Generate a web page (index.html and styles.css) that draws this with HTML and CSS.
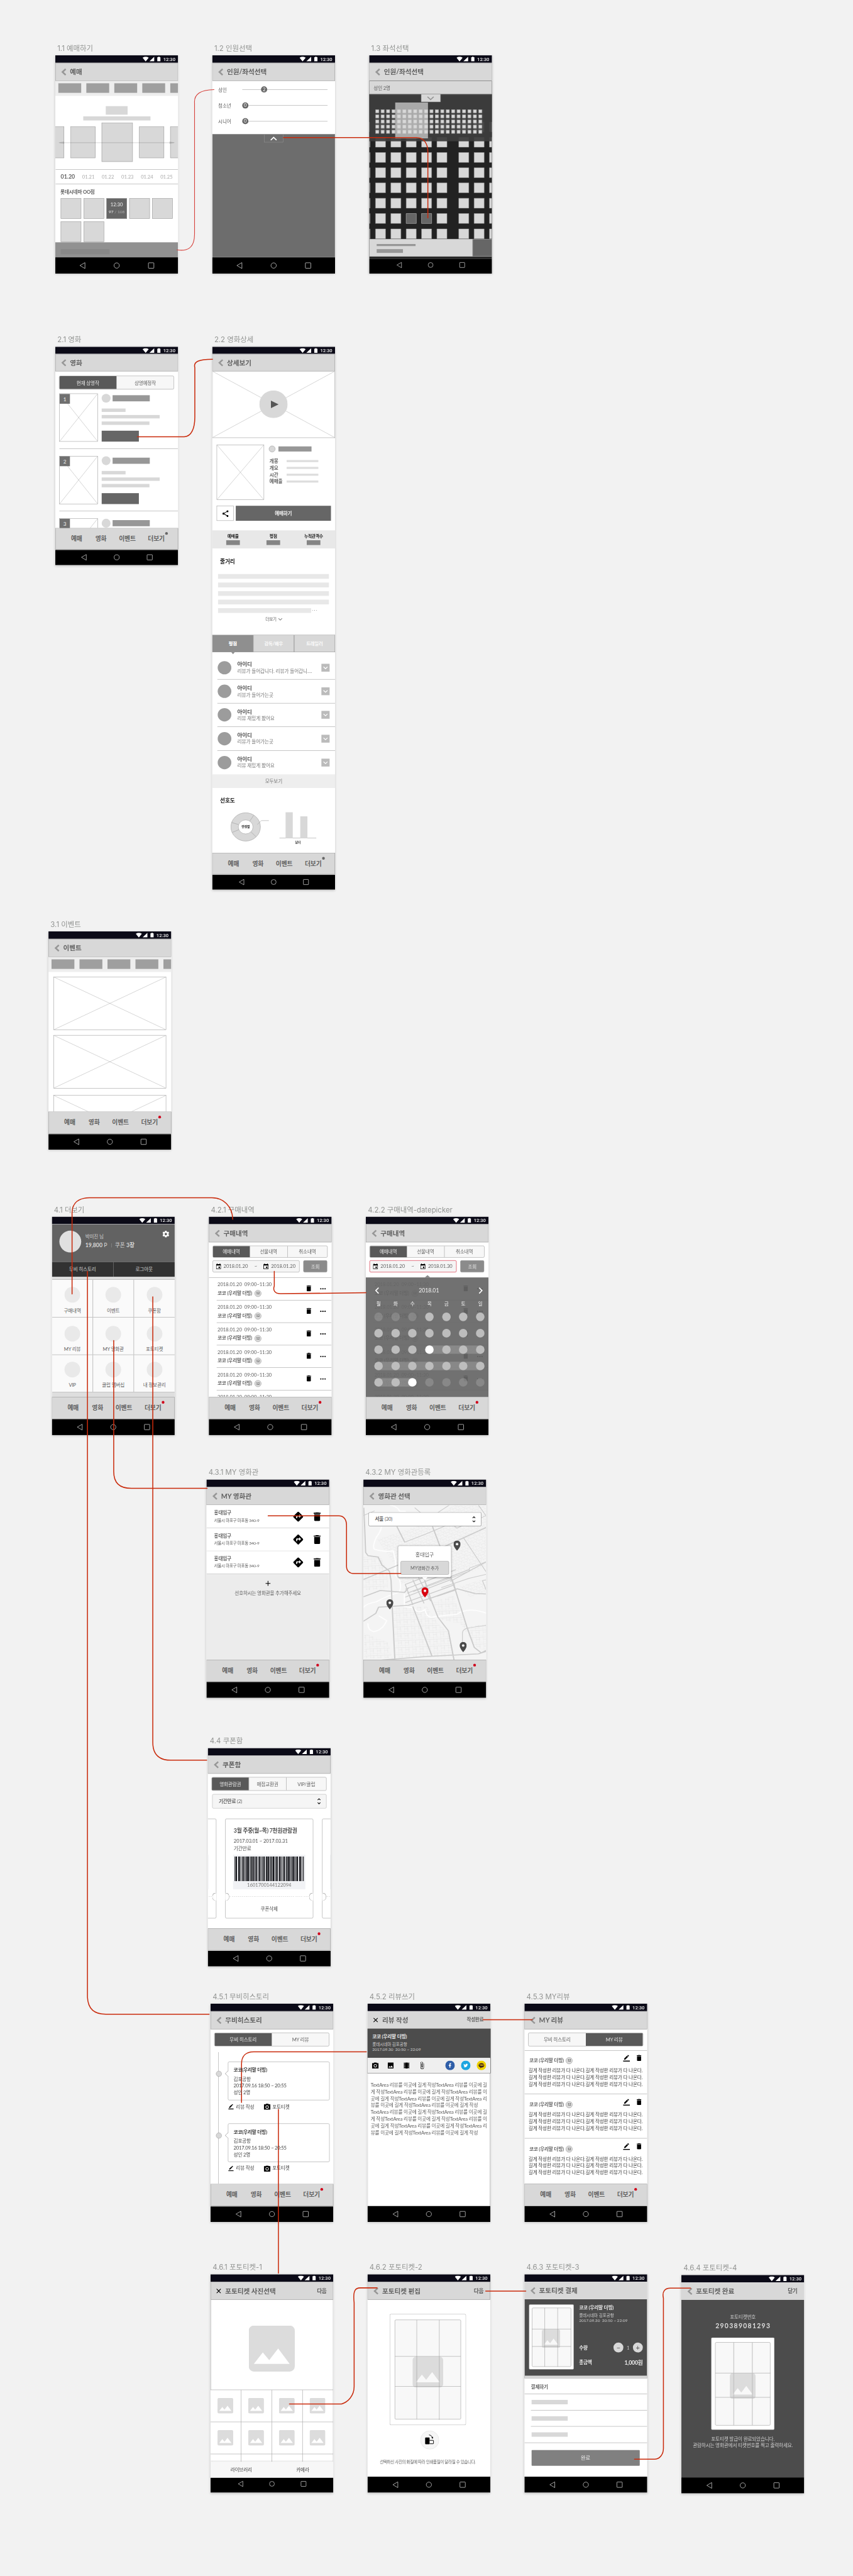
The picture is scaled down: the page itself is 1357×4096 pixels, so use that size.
FILE: index.html
```html
<!DOCTYPE html>
<html lang="ko">
<head>
<meta charset="utf-8">
<title>영화 예매 앱 와이어프레임</title>
<link rel="stylesheet" href="styles.css">
</head>
<body>
<svg class="defs" aria-hidden="true">
  <symbol id="i-status" viewBox="0 0 53 14"><path d="M0 3Q9-2.4 17.8 3L8.9 14zM34 .4V13.6H20zM43 1.6h2.6V.2h4.2v1.4h2.6v12H43z"/></symbol>
  <symbol id="i-sys" viewBox="0 0 360 48"><g fill="none" stroke="#e8e8e8" stroke-width="1.3"><path d="M87 15.5v17.3L72.3 24z" stroke-linejoin="round"/><circle cx="180" cy="24" r="7.8"/><rect x="273" y="16" width="16" height="16" rx="1.2"/></g></symbol>
  <symbol id="i-back" viewBox="0 0 16 22"><path d="M13.5 2.2L4 11l9.500 8.800" fill="none" stroke="#979797" stroke-width="4.600"/></symbol>
  <symbol id="i-up" viewBox="0 0 20 12"><path d="M1.500 10.500L10 2.500l8.500 8" fill="none" stroke="currentColor" stroke-width="3.200"/></symbol>
  <symbol id="i-down" viewBox="0 0 20 12"><path d="M1.500 1.500L10 9.500l8.500-8" fill="none" stroke="currentColor" stroke-width="3.200"/></symbol>
  <symbol id="i-cross" viewBox="0 0 100 100" preserveAspectRatio="none"><path d="M0 0L100 100M100 0L0 100" fill="none" stroke="#979797" stroke-width=".75" vector-effect="non-scaling-stroke"/></symbol>
  <symbol id="i-trash" viewBox="5 3 14 18"><path d="M6 19c0 1.100.9 2 2 2h8c1.100 0 2-.9 2-2V7H6v12zM19 4h-3.500l-1-1h-5l-1 1H5v2h14V4z"/></symbol>
  <symbol id="i-dots" viewBox="4 10 16 4"><path d="M6 10c-1.100 0-2 .9-2 2s.9 2 2 2 2-.9 2-2-.9-2-2-2zm12 0c-1.100 0-2 .9-2 2s.9 2 2 2 2-.9 2-2-.9-2-2-2zm-6 0c-1.100 0-2 .9-2 2s.9 2 2 2 2-.9 2-2-.9-2-2-2z"/></symbol>
  <symbol id="i-route" viewBox="2 2 20 20"><path d="M21.710 11.290l-9-9c-.39-.39-1.020-.39-1.410 0l-9 9c-.39.39-.39 1.020 0 1.410l9 9c.39.39 1.020.39 1.410 0l9-9c.39-.38.39-1.010 0-1.410zM14 14.500V12h-4v3H8v-4c0-.55.45-1 1-1h5V7.500l3.500 3.500-3.500 3.500z"/></symbol>
  <symbol id="i-share" viewBox="3 2 18 20"><path d="M18 16.080c-.76 0-1.440.3-1.960.77L8.910 12.700c.05-.23.09-.46.09-.7s-.04-.47-.09-.7l7.050-4.110c.54.5 1.250.81 2.040.81 1.660 0 3-1.340 3-3s-1.340-3-3-3-3 1.340-3 3c0 .24.04.47.09.7L8.040 9.810C7.500 9.310 6.790 9 6 9c-1.660 0-3 1.340-3 3s1.340 3 3 3c.79 0 1.500-.31 2.040-.81l7.120 4.160c-.05.21-.08.43-.08.65 0 1.610 1.310 2.920 2.920 2.920s2.920-1.310 2.920-2.920-1.310-2.920-2.920-2.920z"/></symbol>
  <symbol id="i-gear" viewBox="2 2 20 20"><path d="M19.430 12.980c.04-.32.07-.64.07-.98s-.03-.66-.07-.98l2.110-1.650c.19-.15.24-.42.12-.64l-2-3.460c-.12-.22-.39-.3-.61-.22l-2.490 1c-.52-.4-1.080-.73-1.690-.98l-.38-2.650C14.460 2.180 14.250 2 14 2h-4c-.25 0-.46.18-.49.42l-.38 2.650c-.61.25-1.170.59-1.690.98l-2.490-1c-.23-.09-.49 0-.61.22l-2 3.460c-.13.22-.07.49.12.64l2.110 1.650c-.04.32-.07.65-.07.98s.03.66.07.98l-2.110 1.650c-.19.15-.24.42-.12.64l2 3.460c.12.22.39.3.61.22l2.490-1c.52.4 1.080.73 1.690.98l.38 2.650c.03.24.24.42.49.42h4c.25 0 .46-.18.49-.42l.38-2.650c.61-.25 1.170-.59 1.690-.98l2.490 1c.23.09.49 0 .61-.22l2-3.460c.12-.22.07-.49-.12-.64l-2.110-1.650zM12 15.500c-1.930 0-3.500-1.570-3.500-3.500s1.570-3.500 3.500-3.500 3.500 1.570 3.500 3.500-1.570 3.500-3.500 3.500z"/></symbol>
  <symbol id="i-pin" viewBox="5 2 14 20"><path fill-rule="evenodd" d="M12 2C8.130 2 5 5.130 5 9c0 5.250 7 13 7 13s7-7.750 7-13c0-3.870-3.130-7-7-7z"/><circle cx="12" cy="9" r="2.500" fill="#f4f4f4"/></symbol>
  <symbol id="i-date" viewBox="3 1 18 20"><path d="M17 12h-5v5h5v-5zM16 1v2H8V1H6v2H5c-1.110 0-1.990.9-1.990 2L3 19c0 1.100.89 2 2 2h14c1.100 0 2-.9 2-2V5c0-1.100-.9-2-2-2h-1V1h-2zm3 18H5V8h14v11z"/></symbol>
  <symbol id="i-sort" viewBox="7 3 10 18"><path d="M12 5.830L15.170 9l1.410-1.410L12 3 7.410 7.590 8.830 9 12 5.830zm0 12.340L8.830 15l-1.410 1.410L12 21l4.590-4.590L15.170 15 12 18.170z"/></symbol>
  <symbol id="i-close" viewBox="5 5 14 14"><path d="M19 6.410L17.590 5 12 10.590 6.410 5 5 6.410 10.590 12 5 17.590 6.410 19 12 13.410 17.590 19 19 17.590 13.410 12z"/></symbol>
  <symbol id="i-image" viewBox="3 3 18 18"><path d="M21 19V5c0-1.100-.9-2-2-2H5c-1.100 0-2 .9-2 2v14c0 1.100.9 2 2 2h14c1.100 0 2-.9 2-2zM8.500 13.500l2.500 3.010L14.500 12l4.500 6H5l3.500-4.500z"/></symbol>
  <symbol id="i-camera" viewBox="2 2 20 18"><circle cx="12" cy="12" r="3.200"/><path d="M9 2L7.170 4H4c-1.100 0-2 .9-2 2v12c0 1.100.9 2 2 2h16c1.100 0 2-.9 2-2V6c0-1.100-.9-2-2-2h-3.170L15 2H9zm3 15c-2.760 0-5-2.240-5-5s2.240-5 5-5 5 2.240 5 5-2.240 5-5 5z"/></symbol>
  <symbol id="i-pencil" viewBox="0 0 24 24"><path d="M17.750 7L14 3.250l-10 10V17h3.750l10-10zm2.960-2.960c.39-.39.39-1.020 0-1.410L18.370.29c-.39-.39-1.020-.39-1.410 0L15 2.250 18.750 6l1.960-1.960zM0 20h24v4H0z"/></symbol>
  <symbol id="i-film" viewBox="4 3 16 18"><path d="M18 3v2h-2V3H8v2H6V3H4v18h2v-2h2v2h8v-2h2v2h2V3h-2zM8 17H6v-2h2v2zm0-4H6v-2h2v2zm0-4H6V7h2v2zm10 8h-2v-2h2v2zm0-4h-2v-2h2v2zm0-4h-2V7h2v2z"/></symbol>
  <symbol id="i-clip" viewBox="7 1 11 22"><path d="M16.500 6v11.500c0 2.210-1.790 4-4 4s-4-1.790-4-4V5c0-1.380 1.120-2.500 2.500-2.500s2.500 1.120 2.500 2.500v10.500c0 .55-.45 1-1 1s-1-.45-1-1V6H10v9.500c0 1.380 1.120 2.500 2.500 2.500s2.500-1.120 2.500-2.500V5c0-2.210-1.790-4-4-4S7 2.790 7 5v12.500c0 3.040 2.460 5.500 5.500 5.500s5.500-2.460 5.500-5.500V6h-1.500z"/></symbol>
  <symbol id="i-photo" viewBox="0 0 18 18"><path fill="#dcdcdc" fill-rule="evenodd" d="M2 0h14a2 2 0 0 1 2 2v14a2 2 0 0 1-2 2H2a2 2 0 0 1-2-2V2a2 2 0 0 1 2-2zM2 15h14l-4.500-6L8 13.510 5.500 10.500z"/></symbol>
  <symbol id="i-next" viewBox="0 0 14 22"><path d="M2.500 2l9 9-9 9" fill="none" stroke="#fff" stroke-width="3.200"/></symbol>
</svg>

<main class="viewport"><div class="board">

<!-- 1.1 -->
<section class="node n11"><h2 class="label">1.1 예매하기</h2><div class="phone">
  <div class="status"><svg><use href="#i-status"/></svg>12:30</div>
  <header class="bar"><svg class="back"><use href="#i-back"/></svg><h3>예매</h3></header>
  <div class="screen booking">
    <div class="chips"><i></i><i></i><i></i><i></i><i></i></div>
    <div class="heading"><i></i><i></i></div>
    <div class="carousel"><i></i><i></i><i class="main"></i><i></i><i></i>
      <svg class="swipe" viewBox="0 0 344 8"><path d="M0 4L18 0V8zM344 4L326 0V8z" fill="#000" opacity=".1"/><path d="M4 4H340" stroke="#000" stroke-width="2.600" opacity=".13"/></svg></div>
    <div class="dates num"><b>01.20</b><span>01.21</span><span>01.22</span><span>01.23</span><span>01.24</span><span>01.25</span></div>
    <h4>롯데시네마 OO점</h4>
    <div class="times"><i></i><i></i><div class="on num"><span>12:30</span><small>97 <em>/ 108</em></small></div><i></i><i></i><i></i><i></i></div>
    <div class="next"><i></i></div>
  </div>
  <svg class="sys"><use href="#i-sys"/></svg>
</div></section>

<!-- 1.2 -->
<section class="node n12"><h2 class="label">1.2 인원선택</h2><div class="phone">
  <div class="status"><svg><use href="#i-status"/></svg>12:30</div>
  <header class="bar"><svg class="back"><use href="#i-back"/></svg><h3>인원/좌석선택</h3></header>
  <div class="screen people">
    <div class="sliders">
      <div class="slide first"><span>성인</span><div class="track"><b class="num">2</b></div></div>
      <div class="slide"><span>청소년</span><div class="track"><b class="num">0</b></div></div>
      <div class="slide"><span>시니어</span><div class="track"><b class="num">0</b></div></div>
    </div>
    <div class="shade"><div class="pull"><svg><use href="#i-up"/></svg></div></div>
  </div>
  <svg class="sys"><use href="#i-sys"/></svg>
</div></section>

<!-- 1.3 -->
<section class="node n13"><h2 class="label">1.3 좌석선택</h2><div class="phone">
  <div class="status"><svg><use href="#i-status"/></svg>12:30</div>
  <header class="bar"><svg class="back"><use href="#i-back"/></svg><h3>인원/좌석선택</h3></header>
  <div class="screen seats">
    <div class="count">성인 2명</div>
    <svg class="hall" viewBox="0 114 360 424">
      <defs>
        <g id="seatrow" fill="#d8d8d8" stroke="#979797"><path d="M-27 .5h29.500v29H-27zM18.500.5H48v29H18.500zM63.500.5H93v29H63.500zM108.500.5H138v29H108.500zM153.500.5H183v29H153.500zM198.500.5H228v29H198.500zM262.500.5H292v29H262.500zM307.500.5H337v29H307.500zM352.500.5H382v29H352.500z"/></g>
        <pattern id="mini" x="18" y="158.500" width="15.900" height="15" patternUnits="userSpaceOnUse"><rect x=".5" y=".5" width="10" height="9.800" fill="#d8d8d8" stroke="#979797"/></pattern>
      </defs>
      <rect y="114" width="360" height="424" fill="#222"/>
      <use href="#seatrow" y="195"/><use href="#seatrow" y="239.600"/><use href="#seatrow" y="284.400"/><use href="#seatrow" y="329"/><use href="#seatrow" y="373.400"/><use href="#seatrow" y="418.300"/><use href="#seatrow" y="463.200"/><use href="#seatrow" y="508.300"/>
      <path d="M108.500 463.700H138v29H108.500zM153.500 463.700H183v29H153.500z" fill="#666" stroke="#979797"/>
      <rect y="114" width="360" height="138" fill="#3d3d3d" opacity=".94"/>
      <rect y="114" width="360" height="3" fill="#484848"/>
      <rect x="18" y="158.500" width="317" height="72" fill="url(#mini)"/>
      <rect x="76.300" y="138.400" width="96" height="105" fill="#d8d8d8" opacity=".7"/>
      <path d="M152.500 113.500v23H209v-23" fill="#d8d8d8" stroke="#979797"/>
      <path d="M171 121.500l9 8.500 9-8.500" fill="none" stroke="#979797" stroke-width="3"/>
    </svg>
    <div class="total"><div><i></i><i></i></div><b></b></div>
  </div>
  <svg class="sys short"><use href="#i-sys" y="-3.500"/></svg>
</div></section>

<!-- 2.1 -->
<section class="node n21"><h2 class="label">2.1 영화</h2><div class="phone">
  <div class="status"><svg><use href="#i-status"/></svg>12:30</div>
  <header class="bar"><svg class="back"><use href="#i-back"/></svg><h3>영화</h3></header>
  <div class="screen">
    <div class="seg two"><b>현재 상영작</b><span>상영예정작</span></div>
    <div class="movie"><div class="poster"><svg><use href="#i-cross"/></svg><em>1</em></div><div class="desc"><p><i></i><i></i></p><i></i><i></i><i></i><b></b></div></div>
    <div class="movie"><div class="poster"><svg><use href="#i-cross"/></svg><em>2</em></div><div class="desc"><p><i></i><i></i></p><i></i><i></i><i></i><b></b></div></div>
    <div class="movie"><div class="poster"><svg><use href="#i-cross"/></svg><em>3</em></div><div class="desc"><p><i></i><i></i></p><i></i><i></i><i></i><b></b></div></div>
  </div>
  <nav class="tabs quiet"><span>예매</span><span>영화</span><span>이벤트</span><span>더보기</span></nav>
  <svg class="sys"><use href="#i-sys"/></svg>
</div></section>

<!-- 2.2 -->
<section class="node n22"><h2 class="label">2.2 영화상세</h2><div class="phone">
  <div class="status"><svg><use href="#i-status"/></svg>12:30</div>
  <header class="bar"><svg class="back"><use href="#i-back"/></svg><h3>상세보기</h3></header>
  <div class="screen detail">
    <div class="video"><svg class="x"><use href="#i-cross"/></svg><svg class="play" viewBox="0 0 83 81"><ellipse cx="41.500" cy="40.500" rx="41.500" ry="40.500" fill="#d8d8d8"/><path d="M34 30v22l22.500-11z" fill="#555"/></svg></div>
    <div class="info"><div class="poster"><svg><use href="#i-cross"/></svg></div><div class="facts"><p><i></i><i></i></p><dl><dt>개봉</dt><dd></dd><dt>개요</dt><dd></dd><dt>시간</dt><dd></dd><dt>예매율</dt><dd></dd></dl></div></div>
    <div class="cta"><div class="share"><svg><use href="#i-share"/></svg></div><b>예매하기</b></div>
    <div class="stats"><div>예매율<i></i></div><div>평점<i></i></div><div>누적관객수<i></i></div></div>
    <div class="story"><h4>줄거리</h4><i></i><i></i><i></i><i></i><p><i></i><svg viewBox="0 0 14 2"><path d="M0 0h2v2H0zM6 0h2v2H6zM12 0h2v2h-2z" fill="#666"/></svg></p><div class="more">더보기<svg><use href="#i-down"/></svg></div></div>
    <div class="subtabs"><b>평점</b><span>감독/배우</span><span>트레일러</span></div>
    <ul class="reviews">
      <li><i></i><div><b>아이디</b><span>리뷰가 들어갑니다. 리뷰가 들어갑니….</span></div><em><svg><use href="#i-down"/></svg></em></li>
      <li><i></i><div><b>아이디</b><span>리뷰가 들어가는곳</span></div><em><svg><use href="#i-down"/></svg></em></li>
      <li><i></i><div><b>아이디</b><span>리뷰 재밌게 봤어요</span></div><em><svg><use href="#i-down"/></svg></em></li>
      <li><i></i><div><b>아이디</b><span>리뷰가 들어가는곳</span></div><em><svg><use href="#i-down"/></svg></em></li>
      <li><i></i><div><b>아이디</b><span>리뷰 재밌게 봤어요</span></div><em><svg><use href="#i-down"/></svg></em></li>
    </ul>
    <div class="all">모두보기</div>
    <div class="taste"><h4>선호도</h4><div class="charts">
      <div class="donut"><svg viewBox="0 0 120 86"><g fill="#d8d8d8" stroke="#979797"><ellipse cx="44" cy="43" rx="43.300" ry="41.500"/><ellipse cx="44" cy="43" rx="21.500" ry="20.500" fill="#fff"/><path d="M56 26l11.500-17M23 36L2.500 30M24 51L5 59M59.500 57.500L74 71.500M78 36l12-11.500h22" fill="none"/></g></svg><span>연령별</span></div>
      <div class="sex"><div><i></i><i></i></div><span>남녀</span></div>
    </div></div>
  </div>
  <nav class="tabs quiet"><span>예매</span><span>영화</span><span>이벤트</span><span>더보기</span></nav>
  <svg class="sys"><use href="#i-sys"/></svg>
</div></section>

<!-- 3.1 -->
<section class="node n31"><h2 class="label">3.1 이벤트</h2><div class="phone">
  <div class="status"><svg><use href="#i-status"/></svg>12:30</div>
  <header class="bar"><svg class="back"><use href="#i-back"/></svg><h3>이벤트</h3></header>
  <div class="screen">
    <div class="chips"><i></i><i></i><i></i><i></i><i></i></div>
    <div class="banners"><svg><use href="#i-cross"/></svg><svg><use href="#i-cross"/></svg><svg><use href="#i-cross"/></svg></div>
  </div>
  <nav class="tabs"><span>예매</span><span>영화</span><span>이벤트</span><span>더보기</span></nav>
  <svg class="sys"><use href="#i-sys"/></svg>
</div></section>

<!-- 4.1 -->
<section class="node n41"><h2 class="label">4.1 더보기</h2><div class="phone">
  <div class="status"><svg><use href="#i-status"/></svg>12:30</div>
  <div class="screen mypage">
    <div class="profile"><i></i><div><p>박미진 님</p><p class="pts"><b>19,800</b> P<s></s>쿠폰 <b>3장</b></p></div><svg><use href="#i-gear"/></svg></div>
    <div class="links"><span>무비 히스토리</span><span>로그아웃</span></div>
    <div class="menu">
      <div><i></i>구매내역</div><div><i></i>이벤트</div><div><i></i>쿠폰함</div>
      <div><i></i>MY 리뷰</div><div><i></i>MY 영화관</div><div><i></i>포토티켓</div>
      <div><i></i>VIP</div><div><i></i>클럽 멤버십</div><div><i></i>내 정보관리</div>
    </div>
  </div>
  <nav class="tabs"><span>예매</span><span>영화</span><span>이벤트</span><span>더보기</span></nav>
  <svg class="sys"><use href="#i-sys"/></svg>
</div></section>

<!-- 4.2.1 -->
<section class="node n421"><h2 class="label">4.2.1 구매내역</h2><div class="phone">
  <div class="status"><svg><use href="#i-status"/></svg>12:30</div>
  <header class="bar"><svg class="back"><use href="#i-back"/></svg><h3>구매내역</h3></header>
  <div class="screen">
    <div class="seg three low"><b>예매내역</b><span>선물내역</span><span>취소내역</span></div>
    <div class="period"><div class="num"><svg><use href="#i-date"/></svg><span>2018.01.20</span><em>~</em><svg><use href="#i-date"/></svg><span>2018.01.20</span></div><b>조회</b></div>
    <ul class="hist">
      <li><div><p class="num">2018.01.20&nbsp; 09:00~11:30</p><b>코코 (우리말 더빙)</b><i>12</i></div><svg class="t"><use href="#i-trash"/></svg><svg class="d"><use href="#i-dots"/></svg></li>
      <li><div><p class="num">2018.01.20&nbsp; 09:00~11:30</p><b>코코 (우리말 더빙)</b><i>12</i></div><svg class="t"><use href="#i-trash"/></svg><svg class="d"><use href="#i-dots"/></svg></li>
      <li><div><p class="num">2018.01.20&nbsp; 09:00~11:30</p><b>코코 (우리말 더빙)</b><i>12</i></div><svg class="t"><use href="#i-trash"/></svg><svg class="d"><use href="#i-dots"/></svg></li>
      <li><div><p class="num">2018.01.20&nbsp; 09:00~11:30</p><b>코코 (우리말 더빙)</b><i>12</i></div><svg class="t"><use href="#i-trash"/></svg><svg class="d"><use href="#i-dots"/></svg></li>
      <li><div><p class="num">2018.01.20&nbsp; 09:00~11:30</p><b>코코 (우리말 더빙)</b><i>12</i></div><svg class="t"><use href="#i-trash"/></svg><svg class="d"><use href="#i-dots"/></svg></li>
      <li><div><p class="num">2018.01.20&nbsp; 09:00~11:30</p></div></li>
    </ul>
  </div>
  <nav class="tabs"><span>예매</span><span>영화</span><span>이벤트</span><span>더보기</span></nav>
  <svg class="sys"><use href="#i-sys"/></svg>
</div></section>

<!-- 4.2.2 -->
<section class="node n422"><h2 class="label">4.2.2 구매내역-datepicker</h2><div class="phone">
  <div class="status"><svg><use href="#i-status"/></svg>12:30</div>
  <header class="bar"><svg class="back"><use href="#i-back"/></svg><h3>구매내역</h3></header>
  <div class="screen">
    <div class="seg three low"><b>예매내역</b><span>선물내역</span><span>취소내역</span></div>
    <div class="period active"><div class="num"><svg><use href="#i-date"/></svg><span>2018.01.20</span><em>~</em><svg><use href="#i-date"/></svg><span>2018.01.30</span></div><b>조회</b></div>
    <div class="under">
    <ul class="hist">
      <li><div><p class="num">2018.01.20&nbsp; 09:00~11:30</p><b>코코 (우리말 더빙)</b><i>12</i></div><svg class="t"><use href="#i-trash"/></svg><svg class="d"><use href="#i-dots"/></svg></li>
      <li><div><p class="num">2018.01.20&nbsp; 09:00~11:30</p><b>코코 (우리말 더빙)</b><i>12</i></div><svg class="t"><use href="#i-trash"/></svg><svg class="d"><use href="#i-dots"/></svg></li>
      <li><div><p class="num">2018.01.20&nbsp; 09:00~11:30</p><b>코코 (우리말 더빙)</b><i>12</i></div><svg class="t"><use href="#i-trash"/></svg><svg class="d"><use href="#i-dots"/></svg></li>
      <li><div><p class="num">2018.01.20&nbsp; 09:00~11:30</p><b>코코 (우리말 더빙)</b><i>12</i></div><svg class="t"><use href="#i-trash"/></svg><svg class="d"><use href="#i-dots"/></svg></li>
      <li><div><p class="num">2018.01.20&nbsp; 09:00~11:30</p><b>코코 (우리말 더빙)</b><i>12</i></div><svg class="t"><use href="#i-trash"/></svg><svg class="d"><use href="#i-dots"/></svg></li>
      <li><div><p class="num">2018.01.20&nbsp; 09:00~11:30</p></div></li>
    </ul>
    <div class="picker">
      <div class="month num"><svg class="prev"><use href="#i-next"/></svg><span>2018.01</span><svg><use href="#i-next"/></svg></div>
      <div class="week"><span>월</span><span>화</span><span>수</span><span>목</span><span>금</span><span>토</span><span>일</span></div>
      <div class="days"><i class="off"></i><i class="off"></i><i class="off"></i><i></i><i></i><i></i><i></i></div>
      <div class="days"><i></i><i></i><i></i><i></i><i></i><i></i><i></i></div>
      <div class="days from"><i></i><i></i><i></i><i class="on"></i><i></i><i></i><i></i></div>
      <div class="days full"><i></i><i></i><i></i><i></i><i></i><i></i><i></i></div>
      <div class="days to"><i></i><i></i><i class="on"></i><i class="off"></i><i class="off"></i><i class="off"></i><i class="off"></i></div>
    </div>
    </div>
  </div>
  <nav class="tabs"><span>예매</span><span>영화</span><span>이벤트</span><span>더보기</span></nav>
  <svg class="sys"><use href="#i-sys"/></svg>
</div></section>

<!-- 4.3.1 -->
<section class="node n431"><h2 class="label">4.3.1 MY 영화관</h2><div class="phone">
  <div class="status"><svg><use href="#i-status"/></svg>12:30</div>
  <header class="bar"><svg class="back"><use href="#i-back"/></svg><h3>MY 영화관</h3></header>
  <div class="screen cinemas">
    <div class="cinema"><div><b>홍대입구</b><span>서울시 마포구 마포동 340-9</span></div><svg class="r"><use href="#i-route"/></svg><svg class="t"><use href="#i-trash"/></svg></div>
    <div class="cinema"><div><b>홍대입구</b><span>서울시 마포구 마포동 340-9</span></div><svg class="r"><use href="#i-route"/></svg><svg class="t"><use href="#i-trash"/></svg></div>
    <div class="cinema"><div><b>홍대입구</b><span>서울시 마포구 마포동 340-9</span></div><svg class="r"><use href="#i-route"/></svg><svg class="t"><use href="#i-trash"/></svg></div>
    <div class="add"><svg viewBox="0 0 14 14"><path d="M7 0v14M0 7h14" stroke="#000" stroke-width="1.800"/></svg>선호하시는 영화관을 추가해주세요</div>
  </div>
  <nav class="tabs"><span>예매</span><span>영화</span><span>이벤트</span><span>더보기</span></nav>
  <svg class="sys"><use href="#i-sys"/></svg>
</div></section>

<!-- 4.3.2 -->
<section class="node n432"><h2 class="label">4.3.2 MY 영화관등록</h2><div class="phone">
  <div class="status"><svg><use href="#i-status"/></svg>12:30</div>
  <header class="bar"><svg class="back"><use href="#i-back"/></svg><h3>영화관 선택</h3></header>
  <div class="screen mapview">
    <svg class="map" viewBox="866 283 656 988" preserveAspectRatio="none">
      <defs>
        <pattern id="st1" width="34" height="30" patternUnits="userSpaceOnUse" patternTransform="rotate(-27)"><path d="M0 0H34M0 0V30M0 15H20M20 15V30M27 0V15" fill="none" stroke="#dadada" stroke-width="1.500"/></pattern>
        <pattern id="st2" width="38" height="44" patternUnits="userSpaceOnUse" patternTransform="rotate(-3)"><path d="M0 0H38M0 0V44M0 14H38M0 28H22M19 14V44" fill="none" stroke="#dadada" stroke-width="1.500"/></pattern>
      </defs>
      <rect x="866" y="283" width="656" height="988" fill="#f4f4f4"/>
      <path d="M940 500l110-40 180-80 120-97h172v390l-190 90-60-200-240 100zM1380 800l142-50v90l-90 30zM1040 640l110-60 60 150-150 60z" fill="url(#st1)"/>
      <path d="M1025 940l180-10 60 110 60 60 25 150-315 10zM866 610h90l40 90v110l-130 20zM1360 900l60 160 102-20v180l-60-40-100-180zM870 1100l130 60 20 100H870zM1240 900l110-40 30 180-110-30z" fill="url(#st2)" opacity=".85"/>
      <g fill="none" stroke="#fdfdfd" stroke-width="7" stroke-linecap="round"><path d="M1010 283q40 10 50 40l30 0M962 425q-5 30-25 60-25 60-12 80 60 20 100 10 20 80 10 120-5 40 25 65 10 60-5 80-60 20-120 60-50 10-69 35M1085 850v80l50 10q20 40 60 10 10 60 50 45 80-10 120-15 60-50 157-8M950 990l40 30q-20 60-70 70-30-10-30-50"/></g>
      <g fill="none" stroke="#cbcbcb" stroke-width="6.500" stroke-linejoin="round">
        <path d="M868 300l5 125 5 160 12 20 55 10 20 50 40 40 9 60 6 165 14 340M866 758l185-92 250-120 221-120M1045 420l42 100M1235 420l40 125 85 290 60 230 38 125 38 36 26-16M866 868l90-40 130 12 22-30M866 1024l66-50 15-40 160-12 130-50 130-55 95 30 60 3M1130 930l55 170 47 145M1190 750l35 130 40 120 55 85 30 185M965 1271l235-22 280-17 42-16" />
        <path d="M1330 770l192-125M1090 870l250-115M1090 905l265-115M1130 760l60 150M1090 790l40 130M1160 745l65 150M1088 790l110-50M1090 820l270-125M1100 845l330-150" stroke-width="5"/>
        <path d="M1400 490l122 220M1340 755l20 70-100 40M1522 645l-90 40v20l-300 130M1522 725l-90 25-150 60M1395 1160v-60q0-30 40-35l87-15M1522 760l-20 5 20 60M1085 520l110-50 140-70 30 30 157-80M1140 300l90 90 35-60 60-47M866 350l60-30M1480 283l42 70" stroke-width="4"/>
      </g>
    </svg>
    <div class="select city"><p><b>서울</b> (30)</p><svg><use href="#i-sort"/></svg></div>
    <div class="popup"><p>홍대입구</p><b>MY영화관 추가</b></div>
    <svg class="pin p1"><use href="#i-pin"/></svg><svg class="pin p2"><use href="#i-pin"/></svg><svg class="pin p3"><use href="#i-pin"/></svg><svg class="pin p4"><use href="#i-pin"/></svg>
  </div>
  <nav class="tabs"><span>예매</span><span>영화</span><span>이벤트</span><span>더보기</span></nav>
  <svg class="sys"><use href="#i-sys"/></svg>
</div></section>

<!-- 4.4 -->
<section class="node n44"><h2 class="label">4.4 쿠폰함</h2><div class="phone">
  <div class="status"><svg><use href="#i-status"/></svg>12:30</div>
  <header class="bar"><svg class="back"><use href="#i-back"/></svg><h3>쿠폰함</h3></header>
  <div class="screen">
    <div class="seg three"><b>영화관람권</b><span>매점교환권</span><span>VIP/클럽</span></div>
    <div class="select"><p><b>기간만료</b> (2)</p><svg><use href="#i-sort"/></svg></div>
    <div class="coupons">
      <div class="coupon"><div class="code"></div><div class="cut"></div></div>
      <div class="coupon"><h4>3월 주중(월~목) 7천원관람권</h4><p class="num">2017.03.01 ~ 2017.03.31</p><p>기간만료</p>
        <div class="code num"><svg viewBox="0 0 204 72" preserveAspectRatio="none"><path d="M0 36H204" stroke="#0c0d12" stroke-width="72" stroke-dasharray="1.600 .8 .8 .8 3.600 3.400 2.600 .6 2.400 1.400 1 1.200 .7 1.600 2.300 1.300 2.800 .6 .7 2.500 3.200 1 1.800 .5 3.500 1.400 .7 .8 1.600 1.400 2.800 1.400 3.900 .7 .7 1.500"/></svg>1601700144122094</div>
        <div class="cut"></div><div class="del">쿠폰삭제</div></div>
      <div class="coupon"><div class="code"></div><div class="cut"></div></div>
    </div>
  </div>
  <nav class="tabs"><span>예매</span><span>영화</span><span>이벤트</span><span>더보기</span></nav>
  <svg class="sys"><use href="#i-sys"/></svg>
</div></section>

<!-- 4.5.1 -->
<section class="node n451"><h2 class="label">4.5.1 무비히스토리</h2><div class="phone">
  <div class="status"><svg><use href="#i-status"/></svg>12:30</div>
  <header class="bar"><svg class="back"><use href="#i-back"/></svg><h3>무비히스토리</h3></header>
  <div class="screen">
    <div class="seg two"><b>무비 히스토리</b><span>MY 리뷰</span></div>
    <div class="timeline">
      <article><div class="watched"><b>코코(우리말 더빙)</b><p>김포공항</p><p>2017.09.16 18:50 ~ 20:55</p><p>성인 2명</p></div><div class="acts"><svg class="p"><use href="#i-pencil"/></svg><span>리뷰 작성</span><svg class="c"><use href="#i-camera"/></svg><span>포토티켓</span></div></article>
      <article><div class="watched"><b>코코(우리말 더빙)</b><p>김포공항</p><p>2017.09.16 18:50 ~ 20:55</p><p>성인 2명</p></div><div class="acts"><svg class="p"><use href="#i-pencil"/></svg><span>리뷰 작성</span><svg class="c"><use href="#i-camera"/></svg><span>포토티켓</span></div></article>
    </div>
  </div>
  <nav class="tabs"><span>예매</span><span>영화</span><span>이벤트</span><span>더보기</span></nav>
  <svg class="sys"><use href="#i-sys"/></svg>
</div></section>

<!-- 4.5.2 -->
<section class="node n452"><h2 class="label">4.5.2 리뷰쓰기</h2><div class="phone">
  <div class="status"><svg><use href="#i-status"/></svg>12:30</div>
  <header class="bar flat"><svg class="close"><use href="#i-close"/></svg><h3>리뷰 작성</h3><b class="sm">작성완료</b></header>
  <div class="screen write">
    <div class="film"><b>코코 (우리말 더빙)</b><p>롯데시네마 김포공항</p><p>2017.09.30&nbsp; 20:50 ~ 22:09</p></div>
    <div class="tools"><svg class="a"><use href="#i-camera"/></svg><svg class="b"><use href="#i-image"/></svg><svg class="c"><use href="#i-film"/></svg><svg class="d"><use href="#i-clip"/></svg>
      <svg class="sns fb" viewBox="0 0 28 28"><circle cx="14" cy="14" r="14" fill="#2f5ea8"/><path transform="translate(5.500 6) scale(.67)" fill="#fff" d="M17 2v4h-2c-.69 0-1 .81-1 1.500V10h3v4h-3v8h-4v-8H7v-4h3V6a4 4 0 0 1 4-4h3z"/></svg>
      <svg class="sns" viewBox="0 0 28 28"><circle cx="14" cy="14" r="14" fill="#1da5e0"/><path transform="translate(6.500 6.500) scale(.62)" fill="#fff" d="M22.460 6c-.77.35-1.600.58-2.460.69.88-.53 1.560-1.370 1.880-2.380-.83.5-1.750.85-2.720 1.050C18.370 4.500 17.260 4 16 4c-2.350 0-4.270 1.920-4.270 4.290 0 .34.04.67.11.98C8.280 9.090 5.110 7.380 3 4.790c-.37.63-.58 1.370-.58 2.150 0 1.490.75 2.810 1.910 3.560-.71 0-1.370-.2-1.950-.5v.03c0 2.080 1.480 3.820 3.440 4.210a4.220 4.220 0 0 1-1.930.07 4.280 4.280 0 0 0 4 2.980 8.520 8.520 0 0 1-5.330 1.840c-.34 0-.68-.02-1.020-.06C3.440 20.290 5.700 21 8.120 21 16 21 20.330 14.460 20.330 8.790c0-.19 0-.37-.01-.56.84-.6 1.560-1.360 2.140-2.230z"/></svg>
      <svg class="sns" viewBox="0 0 28 28"><circle cx="14" cy="14" r="14" fill="#eed100"/><path d="M14 7c4.700 0 8.300 2.900 8.300 6.500S18.700 20 14 20l-3.500 2.300.5-2.700c-3-.9-5.300-3.200-5.300-6.100C5.700 9.900 9.300 7 14 7z" fill="#3a1c1c"/><text x="14" y="15.600" font-size="5.500" font-weight="700" font-family="Roboto" text-anchor="middle" fill="#eed100">TALK</text></svg></div>
    <div class="area"><p>TextArea 리뷰를 이곳에 길게 작성TextArea 리뷰를 이곳에 길<br>게 작성TextArea 리뷰를 이곳에 길게 작성TextArea 리뷰를 이<br>곳에 길게 작성TextArea 리뷰를 이곳에 길게 작성TextArea 리<br>뷰를 이곳에 길게 작성TextArea 리뷰를 이곳에 길게 작성<br>TextArea 리뷰를 이곳에 길게 작성TextArea 리뷰를 이곳에 길<br>게 작성TextArea 리뷰를 이곳에 길게 작성TextArea 리뷰를 이<br>곳에 길게 작성TextArea 리뷰를 이곳에 길게 작성TextArea 리<br>뷰를 이곳에 길게 작성TextArea 리뷰를 이곳에 길게 작성</p></div>
  </div>
  <svg class="sys"><use href="#i-sys"/></svg>
</div></section>

<!-- 4.5.3 -->
<section class="node n453"><h2 class="label">4.5.3 MY리뷰</h2><div class="phone">
  <div class="status"><svg><use href="#i-status"/></svg>12:30</div>
  <header class="bar"><svg class="back"><use href="#i-back"/></svg><h3>MY 리뷰</h3></header>
  <div class="screen mine">
    <div class="seg two"><span>무비 히스토리</span><b>MY 리뷰</b></div>
    <article><div class="top"><b>코코 (우리말 더빙)</b><i>12</i><svg class="p"><use href="#i-pencil"/></svg><svg class="t"><use href="#i-trash"/></svg></div><p>길게 작성한 리뷰가 다 나온다.길게 작성한 리뷰가 다 나온다.<br>길게 작성한 리뷰가 다 나온다.길게 작성한 리뷰가 다 나온다.<br>길게 작성한 리뷰가 다 나온다.길게 작성한 리뷰가 다 나온다.</p></article>
    <article><div class="top"><b>코코 (우리말 더빙)</b><i>12</i><svg class="p"><use href="#i-pencil"/></svg><svg class="t"><use href="#i-trash"/></svg></div><p>길게 작성한 리뷰가 다 나온다.길게 작성한 리뷰가 다 나온다.<br>길게 작성한 리뷰가 다 나온다.길게 작성한 리뷰가 다 나온다.<br>길게 작성한 리뷰가 다 나온다.길게 작성한 리뷰가 다 나온다.</p></article>
    <article><div class="top"><b>코코 (우리말 더빙)</b><i>12</i><svg class="p"><use href="#i-pencil"/></svg><svg class="t"><use href="#i-trash"/></svg></div><p>길게 작성한 리뷰가 다 나온다.길게 작성한 리뷰가 다 나온다.<br>길게 작성한 리뷰가 다 나온다.길게 작성한 리뷰가 다 나온다.<br>길게 작성한 리뷰가 다 나온다.길게 작성한 리뷰가 다 나온다.</p></article>
  </div>
  <nav class="tabs"><span>예매</span><span>영화</span><span>이벤트</span><span>더보기</span></nav>
  <svg class="sys"><use href="#i-sys"/></svg>
</div></section>

<!-- 4.6.1 -->
<section class="node n461"><h2 class="label">4.6.1 포토티켓-1</h2><div class="phone">
  <div class="status"><svg><use href="#i-status"/></svg>12:30</div>
  <header class="bar"><svg class="close"><use href="#i-close"/></svg><h3>포토티켓 사진선택</h3><b>다음</b></header>
  <div class="screen gallery">
    <div class="preview"><svg><use href="#i-photo"/></svg></div>
    <div class="thumbs"><svg><use href="#i-photo"/></svg><svg><use href="#i-photo"/></svg><svg><use href="#i-photo"/></svg><svg><use href="#i-photo"/></svg><svg><use href="#i-photo"/></svg><svg><use href="#i-photo"/></svg><svg><use href="#i-photo"/></svg><svg><use href="#i-photo"/></svg><s></s><s></s><s></s><s></s></div>
    <div class="source"><span>라이브러리</span><span>카메라</span></div>
  </div>
  <svg class="sys short"><use href="#i-sys" y="-4"/></svg>
</div></section>

<!-- 4.6.2 -->
<section class="node n462"><h2 class="label">4.6.2 포토티켓-2</h2><div class="phone">
  <div class="status"><svg><use href="#i-status"/></svg>12:30</div>
  <header class="bar"><svg class="back"><use href="#i-back"/></svg><h3>포토티켓 편집</h3><b>다음</b></header>
  <div class="screen edit">
    <svg class="ticket" viewBox="0 0 224 326"><g fill="none" stroke="#979797"><rect x=".5" y=".5" width="223" height="325" rx="4" fill="#fff"/><rect x="15.500" y="17.500" width="193" height="291" rx="3" fill="#f8f8f8"/></g><use href="#i-photo" x="67" y="125" width="90" height="91"/><path d="M79.500 17.500v291M145.500 17.500v293M15.500 124.500h193M15.500 212.500h193" stroke="#979797"/></svg>
    <svg class="rotate" viewBox="0 0 55 55"><circle cx="27.500" cy="27.500" r="27" fill="#f6f6f6" stroke="#dcdcdc"/><rect x="14" y="20" width="13" height="20" rx="2"/><path d="M27 28.500h10.500a1 1 0 0 1 1 1v8a1 1 0 0 1-1 1H27M25.500 12.500q9 2 10 9.500m-2.600-2.400l2.700 3.400 1-4.500" fill="none" stroke="#000" stroke-width="1.700"/></svg>
    <p>선택하신 사진의 화질에 따라 인쇄품질이 달라질 수 있습니다.</p>
  </div>
  <svg class="sys"><use href="#i-sys"/></svg>
</div></section>

<!-- 4.6.3 -->
<section class="node n463"><h2 class="label">4.6.3 포토티켓-3</h2><div class="phone">
  <div class="status"><svg><use href="#i-status"/></svg>12:30</div>
  <header class="bar flat"><svg class="back"><use href="#i-back"/></svg><h3>포토티켓 결제</h3></header>
  <div class="screen pay">
    <div class="order">
      <svg class="ticket" viewBox="0 0 132 191"><g fill="none" stroke="#979797"><rect x=".5" y=".5" width="131" height="190" rx="3" fill="#fff"/><rect x="9.500" y="10.500" width="114" height="172" rx="3" fill="#f8f8f8"/></g><use href="#i-photo" x="38" y="73.500" width="54" height="54"/><path d="M46.500 10.500v172M84.500 10.500v172M8.500 72.500h115M9.500 123.500h114" stroke="#979797"/></svg>
      <div class="film"><b>코코 (우리말 더빙)</b><p>롯데시네마 김포공항</p><p>2017.09.30&nbsp; 20:50 ~ 22:09</p>
        <div class="qty"><b>수량</b><i>−</i><span>1</span><i>+</i></div>
        <div class="sum"><b>총금액</b><b>1,000원</b></div></div>
    </div>
    <h4>결제하기</h4>
    <div class="method"><i></i></div><div class="method"><i></i></div><div class="method"><i></i></div>
    <div class="done">완료</div>
  </div>
  <svg class="sys"><use href="#i-sys"/></svg>
</div></section>

<!-- 4.6.4 -->
<section class="node n464"><h2 class="label">4.6.4 포토티켓-4</h2><div class="phone">
  <div class="status"><svg><use href="#i-status"/></svg>12:30</div>
  <header class="bar flat"><svg class="back"><use href="#i-back"/></svg><h3>포토티켓 완료</h3><b>닫기</b></header>
  <div class="screen issued">
    <p>포토티켓번호</p><strong>290389081293</strong>
    <svg class="ticket" viewBox="0 0 186 271"><g fill="none" stroke="#979797"><rect x=".5" y=".5" width="185" height="270" rx="3" fill="#fff"/><rect x="12.500" y="14.500" width="161" height="243" rx="3" fill="#f8f8f8"/></g><use href="#i-photo" x="55" y="104.500" width="75.500" height="75.500"/><path d="M12.500 104.500h162M12.500 175.500h161" stroke="#979797"/><path d="M66.500 14.500v243M121 14.500v243" stroke="#bbb" stroke-width="1.800"/></svg>
    <p>포토티켓 발급이 완료되었습니다.<br>관람하시는 영화관에서 티켓번호를 찍고 출력하세요.</p>
  </div>
  <svg class="sys"><use href="#i-sys"/></svg>
</div></section>

<!-- screen flow connectors -->
<svg class="flow" viewBox="0 0 2500 7548">
  <path class="thin" d="M518.400 732C548 737 570 728 570.200 686V302C568 276 588 263 627.400 262.700"/>
  <path d="M830.700 403H1218C1242 402 1254 420 1254 446V638.600"/>
  <path d="M402.700 1279.700H540C561 1279 571 1255 571 1222V1077C566 1059 584 1053 622.700 1052.700"/>
  <path d="M211.200 3791.600V3553C212 3525 230 3510 262 3509.600H616C656 3507 681 3537 682.200 3572.500"/>
  <path d="M256.300 3725V5850C257 5885 275 5902 310 5902H613"/>
  <path d="M333.300 3928V4311C333 4345 350 4361 385 4361H607"/>
  <path d="M447.800 3800V5106C448 5140 465 5157.500 500 5157.500H606"/>
  <path d="M803.900 3725V3768C800 3779 803 3791 823 3790.700L1072.700 3788"/>
  <path d="M785.800 4441.600H993C1008 4441.600 1015.600 4453 1015.600 4469V4590C1015.600 4603 1025 4610.600 1036 4610.600H1174.700"/>
  <path d="M707.900 6160.500V6047C708 6025 720 6012 743.600 6012H1073.700"/>
  <path d="M816 6181V6660.500"/>
  <path d="M1415.400 5918H1559.700"/>
  <path d="M848.200 7044H1001C1020 7038 1037.900 7020 1037.900 6993V6747C1034 6712 1041 6703.800 1056 6703.800H1105.200"/>
  <path d="M1423.400 6713.400H1541"/>
  <path d="M1859.600 7205.700H1919.600C1935 7205 1944.400 7190 1944.400 7174V6734C1940 6715 1948 6704.400 1965 6704.400H2023.800"/>
</svg>
</div></main>
</body>
</html>
```
FILE: styles.css
```css
* { box-sizing: border-box; }
body, h2, h3, h4, p, ul, dl, dd { margin: 0; padding: 0; }
ul { list-style: none; }
i, em { font-style: normal; }
body {
  background: #f2f2f2;
  font-family: Lato, "Noto Sans CJK KR", sans-serif;
  color: #5f5f5f;
}
.defs { position: absolute; width: 0; height: 0; }

.viewport { width: 1357px; height: 4096px; overflow: hidden; }
.board {
  position: relative;
  width: 2500px;
  height: 7548px;
  font-size: 14px;
  line-height: 1.43;
  letter-spacing: -.3px;
  transform: scale(.5428, .54266);
  transform-origin: 0 0;
}
.num { letter-spacing: 0; }
svg { display: block; flex: none; }

/* Artboards on the canvas */
.node { position: absolute; width: 360px; }
.n11 { left: 162px; top: 122px; }
.n12 { left: 622px; top: 122px; }
.n13 { left: 1082px; top: 122px; }
.n21 { left: 162px; top: 976px; }
.n22 { left: 622px; top: 976px; }
.n31 { left: 142px; top: 2689px; }
.n41 { left: 152px; top: 3525px; }
.n421 { left: 612px; top: 3525px; }
.n422 { left: 1072px; top: 3525px; }
.n431 { left: 605px; top: 4295px; }
.n432 { left: 1065px; top: 4295px; }
.n44 { left: 609px; top: 5082px; }
.n451 { left: 617px; top: 5831px; }
.n452 { left: 1077px; top: 5831px; }
.n453 { left: 1537px; top: 5831px; }
.n461 { left: 617px; top: 6624px; }
.n462 { left: 1077px; top: 6624px; }
.n463 { left: 1537px; top: 6624px; }
.n464 { left: 1997px; top: 6626px; }
.label {
  height: 40px;
  padding: 6px 0 0 6px;
  font: 400 21px/28px Inter, "Noto Sans CJK KR", sans-serif;
  letter-spacing: 0;
  color: #929492;
  white-space: nowrap;
}
.phone {
  display: flex;
  flex-direction: column;
  height: 640px;
  overflow: hidden;
  background: #fff;
  box-shadow: 0 2px 7px rgba(0, 0, 0, .2);
}
.screen { flex: 1; min-height: 0; overflow: hidden; }

/* Shared chrome */
.status {
  display: flex;
  align-items: center;
  justify-content: flex-end;
  gap: 7px;
  height: 22px;
  flex: none;
  padding-right: 8px;
  background: #0b0a17;
  color: #eee;
  fill: #fff;
  font: 500 14px/22px Roboto, sans-serif;
  letter-spacing: 0;
}
.status svg { width: 53px; height: 14px; }
.bar {
  display: flex;
  align-items: center;
  height: 53px;
  flex: none;
  padding: 0 19px 0 16px;
  background: #d8d8d8;
  border: 1px solid #979797;
}
.bar.flat { height: 51px; border-color: #d8d8d8; }
.bar .back { width: 16px; height: 22px; margin-right: 10px; }
.bar .close { width: 14px; height: 14px; margin: 0 12px 0 0; }
.bar h3 { flex: 1; font-size: 19.500px; font-weight: 700; letter-spacing: 0; color: #606060; }
.bar b { font-size: 16px; letter-spacing: -.6px; }
.bar b.sm { font-size: 14px; }
.tabs {
  position: relative;
  display: grid;
  grid-template-columns: 71.500px 69px 85px auto;
  height: 65px;
  flex: none;
  padding-left: 45px;
  background: #d8d8d8;
  border: 1px solid #979797;
  font-size: 18px;
  font-weight: 700;
  line-height: 61px;
  letter-spacing: -.2px;
}
.tabs::after {
  content: "";
  position: absolute;
  left: 321px;
  top: 11px;
  width: 8px;
  height: 8px;
  border-radius: 50%;
  background: #d0021b;
}
.tabs.quiet::after { background: #666; }
.sys { width: 360px; height: 47px; background: #000; }
.sys.short { height: 44px; overflow: hidden; }
.sys use { width: 360px; height: 48px; }
.n11 .sys, .n12 .sys { height: 48px; }
.seg {
  display: flex;
  height: 40px;
  margin: 10px 12px 0 11px;
  border: 1px solid #979797;
  border-radius: 4px;
  overflow: hidden;
  background: #f7f7f7;
  text-align: center;
  line-height: 39px;
}
.seg.low { height: 35px; line-height: 34px; }
.seg > * { flex: 1; font-weight: 400; }
.seg b { background: #595959; color: #e6e6e6; }
.seg span + span, .seg b + span { border-left: 1px solid #979797; }
.seg.three > :nth-child(1) { flex: 0 0 107.500px; }
.seg.three > :nth-child(2) { flex: 0 0 110px; }
.select {
  display: flex;
  align-items: center;
  justify-content: space-between;
  width: 335px;
  height: 42px;
  margin: 10px 0 0 13px;
  padding: 0 16px 0 18px;
  background: #f5f5f5;
  border: 1px solid #b0b0b0;
  border-radius: 4px;
}
.select svg { width: 10px; height: 18px; }
.chips {
  display: flex;
  gap: 15px;
  height: 44px;
  padding: 7px 0 0 9px;
  background: #eee;
}
.chips i { flex: none; width: 67px; height: 28px; background: #9f9f9f; }

/* 1.1 booking */
.booking { display: flex; flex-direction: column; }
.booking > * { flex: none; }
.heading { display: flex; flex-direction: column; align-items: center; gap: 5px; padding-top: 30px; }
.heading i { width: 197px; height: 12px; background: #d8d8d8; }
.heading i:first-child { width: 64px; height: 25px; }
.carousel {
  position: relative;
  display: flex;
  align-items: center;
  gap: 18.500px;
  margin: 7px 0 0 -47px;
}
.carousel i { flex: none; width: 73px; height: 92px; background: #d8d8d8; border: 1px solid #979797; }
.carousel .main { width: 91px; height: 114px; }
.swipe { position: absolute; left: 55px; top: 54px; width: 344px; height: 8px; }
.dates {
  display: flex;
  align-items: center;
  justify-content: space-between;
  height: 44px;
  margin: 22px 0 0 1px;
  padding: 0 16px 0 15px;
  border: solid #979797;
  border-width: 1px 0;
  color: #aaa;
}
.dates b { font-size: 16.300px; color: #5f5f5f; }
.booking h4 { height: 41px; padding-left: 15px; line-height: 44px; }
.times { display: grid; grid-template-columns: repeat(5, 60px); gap: 8px 7px; padding-left: 16px; height: 129px; align-content: start; }
.times > * { height: 60px; background: #d8d8d8; border: 1px solid #979797; }
.times .on {
  display: flex;
  flex-direction: column;
  align-items: center;
  padding-top: 8px;
  background: #666;
  color: #f2f2f2;
}
.times small { font-size: 12px; line-height: 22px; white-space: nowrap; }
.times em { color: #aaa; }
.next { height: 48px; padding: 20px 0 0 16px; background: #919191; }
.next i { display: block; width: 143px; height: 15px; background: #888; }

/* 1.2 people */
.people { display: flex; flex-direction: column; }
.sliders { height: 156px; padding: 2px 22px 0 17.500px; }
.slide { display: flex; align-items: center; height: 46.500px; }
.slide span { width: 70.500px; padding-top: 4px; }
.track { flex: 1; display: flex; align-items: center; height: 18px; background: linear-gradient(#979797, #979797) 0 50% / 100% 1px no-repeat; }
.track b {
  width: 18px;
  height: 18px;
  border-radius: 50%;
  background: #666;
  color: #fff;
  font-weight: 400;
  line-height: 18px;
  text-align: center;
}
.first .track b { margin-left: 55px; }
.shade { flex: 1; background: #6d6d6d; border: 1px solid #979797; }
.pull {
  width: 56px;
  height: 24px;
  margin: -1px auto;
  padding: 6px 0 0 17px;
  border: 1px solid #979797;
  color: #fff;
}
.pull svg { width: 20px; height: 12px; }

/* 1.3 seats */
.seats { background: #222; }
.count { height: 39px; padding-left: 13px; line-height: 41px; background: #d8d8d8; }
.hall { width: 360px; height: 424px; }
.total { display: flex; justify-content: space-between; height: 52px; background: #d8d8d8; border: 1px solid #979797; }
.total div { padding: 14px 0 0 21px; }
.total i { display: block; width: 114px; height: 6px; background: #979797; }
.total i + i { width: 77px; height: 11px; margin-top: 9px; }
.total b { width: 56px; background: #666; border-left: 1px solid #979797; }

/* 2.1 movies */
.n21 .status, .n22 .status { height: 21px; }
.n21 .bar, .n22 .bar { height: 51px; }
.n21 .seg { margin-top: 13px; }
.n21 .tabs { height: 63px; line-height: 60px; }
.n21 .sys { height: 46px; }
.movie { display: flex; gap: 11px; height: 162px; margin: 12px 0 0 12px; border-bottom: 1px solid #979797; }
.movie + .movie { margin-top: 21px; }
.poster { position: relative; flex: none; width: 113px; height: 141px; border: 1px solid #979797; }
.poster svg { width: 100%; height: 100%; }
.poster em {
  position: absolute;
  left: 0;
  top: 0;
  width: 30px;
  height: 29px;
  background: #707070;
  color: #f2f2f2;
  font-size: 15px;
  line-height: 30px;
  text-align: center;
}
.desc > i { display: block; width: 140px; height: 10px; margin-bottom: 9px; background: #d8d8d8; }
.desc > i:nth-of-type(1) { width: 70px; }
.desc > i:nth-of-type(2) { width: 170px; }
.desc p { display: flex; align-items: center; gap: 6px; height: 27px; margin: 0 0 17px; }
.desc p i { width: 109px; height: 18px; background: #979797; }
.desc p i:first-child { width: 26px; height: 26px; border-radius: 50%; background: #d8d8d8; }
.desc > b { display: block; width: 109px; height: 32px; margin-top: 17px; background: #666; }

/* 2.2 movie detail */
.n22 .phone { height: 1591px; }
.n22 .tabs { height: 63px; line-height: 60px; }
.n22 .sys { height: 45px; }
.video { position: relative; height: 195px; border: solid #979797; border-width: 0 1px 1px; }
.video .x { width: 100%; height: 100%; }
.play { position: absolute; left: 137px; top: 56px; width: 83px; height: 81px; }
.info { display: flex; padding: 20px 0 0 13px; }
.info .poster { width: 139px; height: 162px; }
.facts { padding: 3px 0 0 14px; }
.facts p { display: flex; align-items: center; gap: 9px; height: 19px; }
.facts p i { width: 97px; height: 15px; background: #979797; }
.facts p i:first-child { width: 19px; height: 19px; border-radius: 50%; background: #d8d8d8; border: 1px solid #979797; }
.facts dl { display: grid; grid-template-columns: 50px 93px; align-items: center; padding: 16px 0 0 2px; line-height: 20px; font-weight: 700; }
.facts dt { white-space: nowrap; }
.facts dd { height: 6px; background: #ddd; }
.cta { display: flex; gap: 6px; padding: 17px 0 28px 13px; }
.share { width: 50px; height: 44px; padding: 12px 0 0 16px; border: 1px solid #979797; }
.share svg { width: 18px; height: 20px; fill: #000; }
.cta b { width: 279px; background: #666; color: #f2f2f2; line-height: 44px; text-align: center; }
.stats { display: flex; height: 53px; padding: 8px 7px 0 5px; justify-content: space-between; background: #e8e8e8; color: #222; font-size: 12.500px; font-weight: 700; text-align: center; letter-spacing: -.6px; line-height: 19px; }
.stats div { width: 112px; }
.stats i { display: block; width: 40px; height: 14px; margin: 2px auto 0; background: #858585; }
.story { height: 253px; padding: 26px 0 0 17px; }
.story h4, .taste h4 { height: 49px; padding-left: 6px; font-size: 16px; line-height: 24px; color: #222; }
.story i { display: block; width: 325px; height: 14px; margin-bottom: 11px; background: #e8e8e8; }
.story p { display: flex; align-items: center; gap: 3px; height: 14px; }
.story p i { width: 273px; margin: 0; }
.story p svg { width: 14px; height: 2px; }
.more { display: flex; align-items: center; gap: 5px; padding: 10px 0 0 139px; font-size: 12px; }
.more svg { width: 13px; height: 9px; color: #8c8c8c; }
.subtabs { position: relative; display: flex; height: 51px; border: 1px solid #979797; background: #979797; gap: 1.500px; line-height: 50px; text-align: center; font-weight: 700; color: #fbfbfb; font-size: 13.500px; }
.subtabs > * { flex: 1; background: #d8d8d8; }
.subtabs b { background: #8f8f8f; }
.subtabs::after { content: ""; position: absolute; left: 55px; top: 50px; border: 5px solid transparent; border-top: 6px solid #8f8f8f; border-bottom: 0; }
.reviews { padding: 11px 0 0 15px; }
.reviews li { display: flex; align-items: center; height: 69.400px; padding: 0 16px 0 1px; border-bottom: 1px solid #979797; }
.reviews li:last-child { border: 0; }
.reviews li > i { width: 40px; height: 39px; border-radius: 50%; background: #9c9c9c; }
.reviews div { flex: 1; padding-left: 17.500px; }
.reviews b { display: block; font-size: 15.500px; font-weight: 500; line-height: 20px; color: #222; letter-spacing: 0; }
.reviews span { display: block; line-height: 20px; color: #777; white-space: nowrap; letter-spacing: -.1px; }
.reviews em { width: 24px; height: 23px; padding: 7px 0 0 5px; background: #bbb; color: #fff; }
.reviews em svg { width: 14px; height: 10px; }
.all { height: 40px; background: #eee; line-height: 39px; text-align: center; color: #777; }
.taste { padding: 24px 0 0 17px; }
.taste h4 { height: 47px; }
.charts { display: flex; }
.donut { position: relative; width: 120px; margin-left: 37px; }
.donut svg { width: 120px; height: 86px; }
.donut span { position: absolute; left: 22px; top: 36px; width: 44px; font-size: 9px; font-weight: 700; line-height: 14px; text-align: center; color: #222; }
.sex { width: 108px; margin-left: 23px; font-size: 9px; font-weight: 700; line-height: 26px; text-align: center; color: #222; }
.sex div { display: flex; align-items: flex-end; gap: 22px; height: 76px; padding-left: 18px; background: linear-gradient(#979797, #979797) 0 100% / 100% 1px no-repeat; }
.sex i { width: 21px; height: 76px; background: #d8d8d8; }
.sex i + i { height: 64px; }

/* 3.1 events */
.banners { padding: 14px 15px 0; }
.banners svg { width: 330px; height: 156px; margin-bottom: 15px; border: 1px solid #979797; }
.banners svg:nth-child(2) { margin-bottom: 20px; }

/* 4.1 my page */
.mypage { display: flex; flex-direction: column; background: #dedede; }
.mypage > * { flex: none; }
.profile { display: flex; height: 111px; padding: 19px 16px 0 22px; background: #626262; color: #ccc; }
.profile > i { width: 64px; height: 64px; border-radius: 50%; background: #e0e0e0; }
.profile div { flex: 1; padding: 8px 0 0 12px; }
.pts { margin-top: 4px; font-size: 16px; letter-spacing: 0; color: #d8d8d8; }
.pts s { display: inline-block; width: 1px; height: 12px; margin: 0 10px 0 12px; background: #999; }
.profile svg { width: 20px; height: 20px; fill: #fff; }
.links { display: flex; height: 43px; background: #323232; color: #ccc; text-align: center; line-height: 42px; }
.links span { flex: 1; }
.links span + span { border-left: 1px solid #8a8a8a; }
.menu { display: grid; grid-template-columns: 120px 120px 1fr; grid-template-rows: repeat(3, 110px); height: 331px; margin: 8px 0 0 1px; border-top: 1px solid #979797; background: #fafafa; text-align: center; }
.menu div { padding-top: 21px; border: solid #979797; border-width: 0 0 1px; }
.menu div:nth-child(n+4) { padding-top: 25px; }
.menu div:nth-child(n+7) { padding-top: 20px; }
.menu div:not(:nth-child(3n)) { border-right: 2px solid #c4c4c4; }
.menu i { display: block; width: 46px; height: 46px; margin: 0 auto 13px; border-radius: 50%; background: #e9e9e9; }

/* 4.2 purchase history */
.period { display: flex; justify-content: space-between; height: 50px; margin: 8px 13px 0 11px; }
.period div { display: flex; align-items: center; width: 255px; height: 35px; padding: 0 11px 0 9px; background: #f5f5f5; border: 1px solid #979797; border-radius: 4px; }
.period svg { width: 15px; height: 17px; margin-right: 7px; fill: #000; }
.period em { flex: 1; text-align: center; }
.period b { width: 70px; height: 35px; border: 1px solid #979797; border-radius: 4px; background: #8b8b8b; color: #e0e0e0; font-weight: 400; line-height: 34px; text-align: center; }
.period.active div { border: 1.500px solid #d0021b; }
.hist { border-top: 1px solid #979797; }
.hist li { display: flex; height: 66px; margin-left: 23px; padding: 8px 17px 0 2.500px; border-bottom: 1px solid #979797; }
.hist div { flex: 1; }
.hist p { line-height: 23px; margin-bottom: 2px; }
.hist b { line-height: 23px; }
.hist i, .mine i { display: inline-block; width: 20px; height: 20px; margin-left: 7px; border: 1px solid #979797; border-radius: 50%; background: #d8d8d8; font-size: 9px; font-weight: 700; line-height: 18px; text-align: center; vertical-align: 1px; }
.hist .t { width: 14px; height: 18px; margin: 14px 26px 0 0; }
.hist .d { width: 17px; height: 5px; margin-top: 22px; }
.under { position: relative; height: 351px; }
.under::before { content: ""; position: absolute; left: 173px; top: -7px; border: 8px solid transparent; border-top: 0; border-bottom: 7px solid #8b8b8b; }
.picker { position: absolute; inset: 0; padding: 25px 12px 0 25px; border-top: 1px solid #979797; background: rgba(102, 102, 102, .93); color: #f2f2f2; }
.month { display: flex; align-items: center; justify-content: space-between; padding: 0 5px 0 2px; height: 24px; font-size: 16px; }
.month svg { width: 13px; height: 21px; }
.month .prev { transform: scaleX(-1); }
.week, .days { display: grid; grid-template-columns: repeat(7, 25px); justify-content: space-between; }
.week { height: 52px; line-height: 54px; text-align: center; }
.days { height: 25px; margin: 0 0 23px; }
.week + .days { margin-top: 1px; }
.days i { border-radius: 50%; background: #bdbdbd; }
.days .off { background: rgba(160, 160, 160, .5); }
.days .on { background: #fff; }
.days.full { border-radius: 13px; background: rgba(160, 160, 160, .5); }
.days.from { border-radius: 13px; background: linear-gradient(rgba(160, 160, 160, .5) 0 0) 100% 0 / 161px 25px no-repeat; }
.days.to { border-radius: 13px; background: linear-gradient(rgba(160, 160, 160, .5) 0 0) 0 0 / 110px 25px no-repeat; }

/* 4.3 cinemas */
.cinemas { background: #ececec; }
.cinema { display: flex; align-items: center; height: 67px; padding: 0 25px 0 22.500px; background: #fff; border-bottom: 1px solid #b5b5b5; }
.cinema:first-child { height: 68px; }
.cinema div { flex: 1; }
.cinema b, .cinema span { display: block; line-height: 22px; }
.cinema span { font-size: 12px; letter-spacing: -.5px; }
.cinema .r { width: 30px; height: 30px; margin-right: 30px; }
.cinema .t { width: 21px; height: 26px; }
.add { padding-top: 20px; text-align: center; line-height: 20px; letter-spacing: -.35px; }
.add svg { width: 15px; height: 15px; margin: 0 auto 11px; }
.mapview { position: relative; }
.map { position: absolute; width: 360px; height: 454px; }
.select.city { position: relative; width: 331px; height: 41px; margin: 21px 0 0 15px; background: #fff; border-color: #666; fill: #000; }
.popup { position: absolute; left: 102px; top: 120px; width: 155px; height: 91px; padding: 15px 6.500px 0; border-radius: 4px; background: #fff; box-shadow: 0 1px 5px rgba(0, 0, 0, .4); text-align: center; }
.popup::after { content: ""; position: absolute; left: 70px; top: 91px; border: 8px solid transparent; border-top: 9px solid #fff; border-bottom: 0; }
.popup p { font-size: 15px; height: 29px; }
.popup b { display: block; height: 40px; border: 1px solid #979797; border-radius: 4px; background: #d8d8d8; font-size: 13.500px; font-weight: 400; line-height: 39px; letter-spacing: -.5px; }
.pin { position: absolute; width: 21px; height: 30px; fill: #4a4a4a; }
.p1 { left: 264px; top: 104px; }
.p2 { left: 67px; top: 276px; }
.p3 { left: 170px; top: 241px; fill: #d9000f; }
.p4 { left: 282px; top: 401px; }

/* 4.4 coupons */
.coupons { display: flex; gap: 26px; margin: 30px 0 0 -233px; }
.coupon { position: relative; flex: none; width: 258px; height: 292px; padding: 22px 0 0 24px; border: 1px solid #979797; border-radius: 4px; color: #4a4a4a; }
.coupon h4 { font-size: 16px; line-height: 24px; letter-spacing: -.35px; white-space: nowrap; margin-bottom: 7px; }
.coupon p { line-height: 22px; }
.coupon p + p { letter-spacing: 0; }
.code { position: absolute; left: 22px; top: 105px; width: 212px; height: 101px; padding: 5px 4px 0; background: #f1f2f5; color: #777; text-align: center; line-height: 22px; }
.code svg { width: 204px; height: 72px; }
.cut { position: absolute; left: 0; top: 216px; width: 256px; height: 22px; background: repeating-linear-gradient(90deg, #ccc 0 4px, transparent 4px 6px) 0 10px / 100% 1px no-repeat; }
.cut::before, .cut::after { content: ""; position: absolute; top: 0; width: 11px; height: 22px; background: #fff; border: 1px solid #979797; }
.cut::before { left: -1px; border-left: 0; border-radius: 0 11px 11px 0; }
.cut::after { right: -1px; border-right: 0; border-radius: 11px 0 0 11px; }
.del { position: absolute; left: 0; right: 0; top: 253px; text-align: center; }

/* 4.5.1 history timeline */
.timeline { height: 386px; margin-top: 17px; padding-top: 28px; background: linear-gradient(#979797, #979797) 23px 0 / 1px 100% no-repeat; }
.timeline article { height: 180.500px; padding-left: 50.500px; }
.watched { position: relative; width: 298px; height: 113px; padding: 14px 16px 0; border: 1px solid #979797; border-radius: 4px; line-height: 20px; color: #444; }
.watched b { display: block; margin-bottom: 6px; color: #333; }
.watched::before { content: ""; position: absolute; left: -7px; top: 28px; width: 11px; height: 11px; transform: rotate(45deg); border: solid #979797; border-width: 0 0 1px 1px; background: #fff; }
.watched::after { content: ""; position: absolute; left: -36px; top: 26px; width: 15px; height: 15px; border: 1px solid #979797; border-radius: 50%; background: #d8d8d8; }
.watched b, .watched p { position: relative; z-index: 1; }
.acts { display: flex; align-items: center; height: 38px; }
.acts span { color: #444; }
.acts .p { width: 16px; height: 16px; margin: 0 7px 0 1px; }
.acts .c { width: 20px; height: 18px; margin: 0 5px 0 28px; }

/* 4.5.2 review writing */
.film { color: #ccc; font-size: 12px; line-height: 16px; letter-spacing: 0; }
.film b { display: block; font-size: 14px; line-height: 20px; letter-spacing: -.3px; color: #ececec; }
.film b + p { margin-top: 4px; }
.write { display: flex; flex-direction: column; }
.write .film { height: 86px; padding: 14px; background: #4c4c4c; }
.tools { display: flex; align-items: center; height: 44px; padding: 0 12px 0 13px; background: #efefef; }
.tools .a { width: 20px; height: 18px; margin-right: 26px; }
.tools .b { width: 18px; height: 18px; margin-right: 29px; }
.tools .c { width: 17px; height: 18px; margin-right: 32px; }
.tools .d { width: 11px; height: 22px; }
.sns { width: 28px; height: 28px; margin-left: 18px; }
.sns.fb { margin-left: auto; }
.area { flex: 1; padding: 25px 0 0 8.500px; border: solid #979797; border-width: 0 1px; white-space: nowrap; line-height: 20px; }

/* 4.5.3 my reviews */
.mine .seg { margin-bottom: 12px; }
.mine article { height: 130px; padding: 12px 12px 0; border-top: 1px solid #979797; color: #3c3c3c; line-height: 20px; white-space: nowrap; }
.mine .seg + article { height: 127px; padding-top: 10px; }
.top { display: flex; align-items: center; height: 38px; color: #5f5f5f; padding: 0 5px 0 2px; }
.mine i { margin-left: 6px; }
.top .p { width: 20px; height: 20px; margin: -15px 20px 0 auto; }
.top .t { width: 14px; height: 18px; margin-top: -17px; }

/* 4.6.1 photo picking */
.gallery { position: relative; }
.preview { height: 264px; padding: 75px 0 0 111px; border: solid #979797; border-width: 0 1px 1px; }
.preview svg { width: 135px; height: 135px; }
.thumbs { display: grid; grid-template-columns: repeat(4, 90px); grid-auto-rows: 94px; }
.thumbs > * { width: 90px; height: 94px; padding: 23px 22px 24px 20px; border: solid #979797; border-width: 0 1px 1px 0; }
.source { position: absolute; left: 0; bottom: 0; display: flex; width: 360px; height: 47px; background: #f7f7f7; box-shadow: 0 -2px 4px rgba(0, 0, 0, .15); line-height: 48px; text-align: center; color: #444; }
.source span { flex: 1; }

/* 4.6.2 photo editing */
.edit { display: flex; flex-direction: column; align-items: center; padding-top: 41px; }
.edit .ticket { width: 224px; height: 326px; margin-right: 7px; }
.rotate { width: 55px; height: 55px; margin: 16px 0 28px 4px; }
.edit p { font-size: 12px; letter-spacing: -.6px; white-space: nowrap; margin-right: 7px; line-height: 20px; }

/* 4.6.3 payment */
.order { display: flex; height: 232px; padding: 15px 13px 0; background: #4c4c4c; border-bottom: 8px solid #d8d8d8; color: #ececec; }
.order .ticket { width: 132px; height: 191px; }
.order .film { flex: 1; padding-left: 15px; }
.qty { display: flex; align-items: center; height: 29px; margin-top: 56px; }
.qty b { flex: 1; }
.qty i { width: 29px; height: 29px; border-radius: 50%; background: #d8d8d8; color: #555; font-size: 20px; line-height: 29px; text-align: center; }
.qty span { width: 28px; font-size: 14px; text-align: center; }
.sum { display: flex; justify-content: space-between; margin-top: 19px; }
.sum b + b { font-size: 16px; }
.pay h4 { height: 46px; padding-left: 19px; line-height: 47px; border-bottom: 1px solid #979797; }
.method { height: 47.500px; margin-left: 19px; padding: 17px 0 0 2px; border-bottom: 1px solid #979797; }
.method:nth-of-type(4) { margin-left: 0; padding-left: 21px; }
.method i { display: block; width: 106px; height: 13px; background: #d8d8d8; }
.done { width: 317px; height: 46px; margin: 21px 0 0 20.500px; border-radius: 2px; background: #808080; color: #ececec; line-height: 46px; text-align: center; font-size: 15px; }

/* 4.6.4 issued */
.issued { display: flex; flex-direction: column; align-items: center; padding-top: 40px; background: #4c4c4c; color: #ccc; line-height: 20px; text-align: center; }
.issued strong { margin: 4px 0 22px 2px; font-size: 19px; line-height: 24px; letter-spacing: 2.500px; color: #dedede; }
.issued .ticket { width: 186px; height: 271px; margin-bottom: 16px; }

/* Connectors between artboards */
.flow { position: absolute; left: 0; top: 0; width: 2500px; height: 7548px; pointer-events: none; }
.flow path { fill: none; stroke: #c92a0b; stroke-width: 2.800; stroke-linecap: round; }
.flow .thin { stroke: #d6403a; stroke-width: 2; }
```
